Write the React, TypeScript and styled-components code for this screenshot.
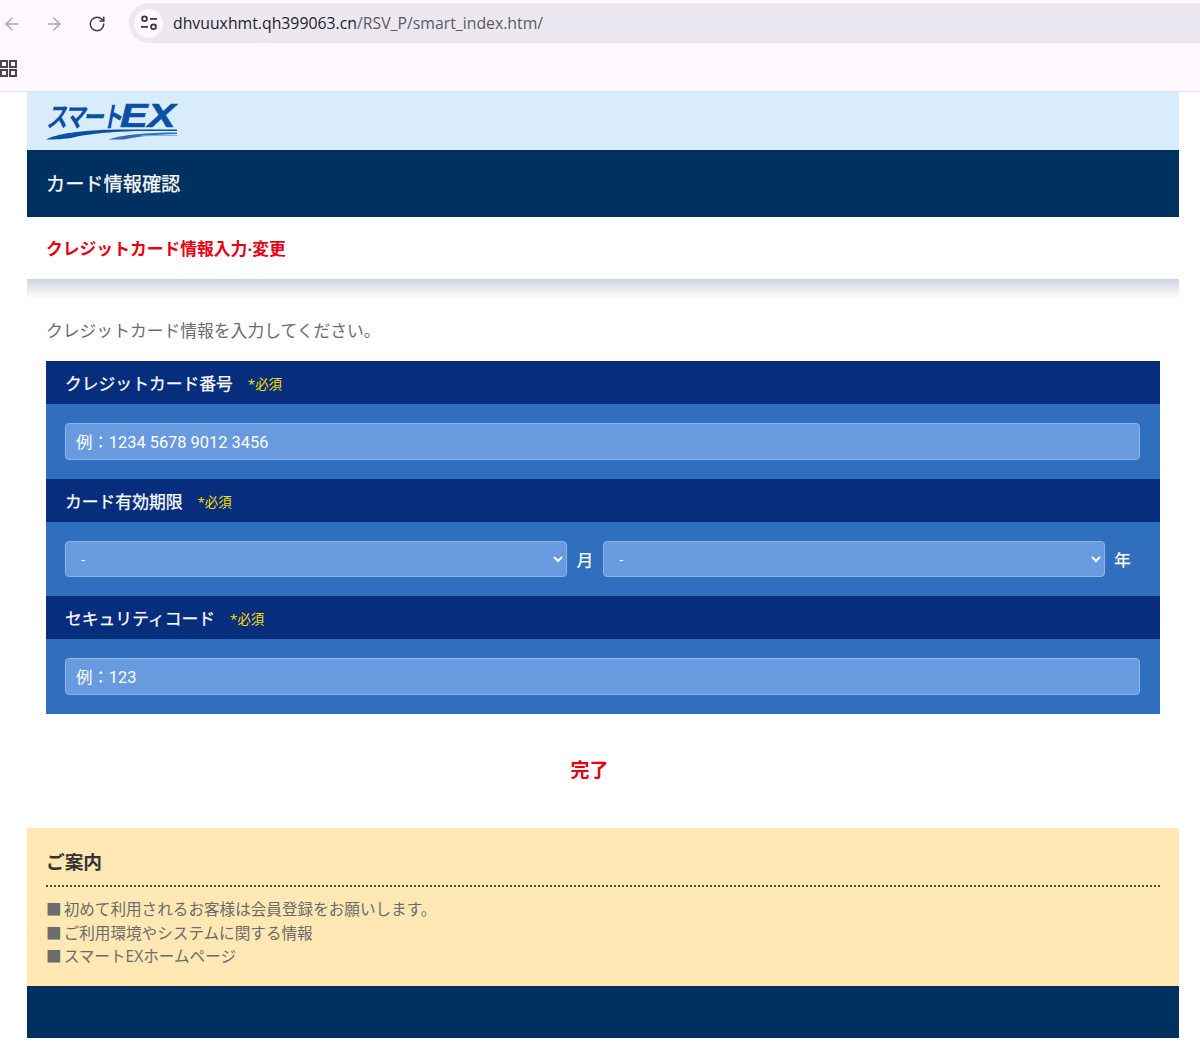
import React from 'react';
import styled, { createGlobalStyle } from 'styled-components';
import { ArrowLeft, ArrowRight, RotateCw } from 'lucide-react';

const GlobalStyle = createGlobalStyle`
  html, body {
    margin: 0;
    padding: 0;
    background: #ffffff;
    font-family: "Open Sans", "Noto Sans CJK JP", sans-serif;
  }
  * {
    box-sizing: border-box;
  }
`;

const BrowserBar = styled.div`
  height: 92px;
  background: #fdf7ff;
  border-bottom: 1px solid #e6e2e8;
`;

const Toolbar = styled.div`
  height: 46px;
  display: flex;
  align-items: center;
  padding-top: 1px;
`;

const NavButton = styled.div<{ $width: number; $color: string }>`
  width: ${(p) => p.$width}px;
  display: flex;
  justify-content: center;
  color: ${(p) => p.$color};
`;

const UrlPill = styled.div`
  flex: 1;
  height: 40px;
  margin-left: 19px;
  margin-top: -1px;
  padding-left: 5px;
  display: flex;
  align-items: center;
  gap: 10px;
  background: #ece8f1;
  border-radius: 20px 0 0 20px;
  font-family: "Open Sans", sans-serif;
  font-size: 15.8px;
  color: #5c5a63;
`;

const SiteBadge = styled.div`
  width: 29px;
  height: 29px;
  border-radius: 50%;
  background: #fdf7ff;
  display: flex;
  align-items: center;
  justify-content: center;
`;

const Host = styled.span`
  color: #1f1d26;
`;

const BookmarkRow = styled.div`
  height: 45px;
  display: flex;
  align-items: center;
`;

const Page = styled.div`
  width: 1152px;
  margin-left: 27px;
`;

const LogoBar = styled.div`
  height: 58px;
  background: #d9ecfb;
  padding: 8px 0 0 19px;
`;

const LogoWrap = styled.div`
  position: relative;
  width: 134px;
  height: 42px;
`;

const LogoText = styled.div`
  display: flex;
  align-items: center;
  height: 30px;
  font-family: "Liberation Sans", "Noto Sans CJK JP", sans-serif;
  font-weight: 700;
  font-style: italic;
  color: #0a50a5;
  white-space: nowrap;
`;

const LogoKana = styled.span`
  display: inline-block;
  width: 74px;
  font-size: 28px;
  letter-spacing: -3.5px;
  transform: scaleX(0.76);
  transform-origin: left center;
`;

const LogoLatin = styled.span`
  display: inline-block;
  font-size: 34px;
  -webkit-text-stroke: 0.7px #0a50a5;
  transform: scaleX(1.22);
  transform-origin: left center;
`;

const LogoSwoosh = styled.svg`
  position: absolute;
  left: 0;
  top: 29px;
`;

const TitleBar = styled.div`
  height: 67px;
  padding: 0 0 2px 19px;
  background: #003060;
  color: #ffffff;
  font-size: 19.2px;
  font-weight: 400;
  -webkit-text-stroke: 0.25px #ffffff;
  display: flex;
  align-items: center;
`;

const SubTitle = styled.div`
  height: 62px;
  display: flex;
  align-items: center;
  padding-left: 19px;
  color: #e60012;
  font-size: 16.8px;
  font-weight: 700;
`;

const Shade = styled.div`
  height: 20px;
  background: linear-gradient(#d0d4e2, #ffffff);
`;

const Lead = styled.p`
  margin: 0;
  height: 62px;
  padding: 20px 0 0 19px;
  font-size: 16.8px;
  line-height: 24px;
  color: #6b6b6b;
`;

const Form = styled.form`
  margin: 0 19px;
`;

const FieldHead = styled.div`
  height: 43px;
  background: #062e7c;
  color: #ffffff;
  font-size: 16.8px;
  font-weight: 400;
  -webkit-text-stroke: 0.25px #ffffff;
  display: flex;
  align-items: center;
  padding-left: 19px;
  gap: 15px;
`;

const Required = styled.span`
  color: #ffdf00;
  font-size: 13.4px;
  font-weight: 400;
  -webkit-text-stroke: 0;
`;

const FieldBody = styled.div<{ $height: number }>`
  height: ${(p) => p.$height}px;
  background: #306fbe;
  display: flex;
  align-items: center;
  padding: 0 20px 0 19px;
`;

const TextInput = styled.input`
  width: 100%;
  height: 37px;
  padding: 2px 10px 0;
  background: #689ae0;
  border: 1px solid #8eb4ea;
  border-radius: 4px;
  color: #ffffff;
  font-family: Roboto, "Noto Sans CJK JP", sans-serif;
  font-size: 16.4px;
  outline: none;
  &::placeholder {
    color: #ffffff;
    opacity: 1;
  }
`;

const SelectInput = styled.select`
  flex: 1;
  min-width: 0;
  height: 36px;
  padding: 0 11px;
  background-color: #689ae0;
  border: 1px solid #8eb4ea;
  border-radius: 4px;
  color: #ffffff;
  font-family: inherit;
  font-size: 14px;
  outline: none;
`;

const Unit = styled.span`
  width: 36px;
  text-align: center;
  color: #ffffff;
  font-size: 16.4px;
  font-weight: 400;
  -webkit-text-stroke: 0.25px #ffffff;
`;

const LastUnit = styled(Unit)`
  width: 35px;
`;

const Done = styled.div`
  height: 114px;
  display: flex;
  align-items: center;
  justify-content: center;
  padding: 0 27px 4px 0;
  color: #e60012;
  font-size: 19px;
  font-weight: 700;
`;

const Notice = styled.section`
  height: 158px;
  background: #ffe8b3;
  padding: 0 19px;
`;

const NoticeTitle = styled.h2`
  margin: 0;
  height: 59px;
  padding: 7px 0 0;
  display: flex;
  align-items: center;
  border-bottom: 2px dotted #4a4a3f;
  color: #333333;
  font-size: 18.7px;
  font-weight: 700;
`;

const NoticeList = styled.ul`
  margin: 0;
  padding: 11px 0 0;
  list-style: none;
`;

const NoticeItem = styled.li`
  font-size: 15.6px;
  line-height: 23.5px;
  word-spacing: -2px;
  color: #6b6b6b;
`;

const Footer = styled.footer`
  height: 52px;
  background: #003060;
`;

export default function App() {
  return (
    <>
      <GlobalStyle />
      <BrowserBar>
        <Toolbar>
          <NavButton $width={24} $color="#a9a6ad">
            <ArrowLeft size={20} strokeWidth={1.8} />
          </NavButton>
          <NavButton $width={60} $color="#a9a6ad">
            <ArrowRight size={20} strokeWidth={1.8} />
          </NavButton>
          <NavButton $width={26} $color="#3f3d45">
            <RotateCw size={18} strokeWidth={2} />
          </NavButton>
          <UrlPill>
            <SiteBadge>
              <svg width="18" height="16" viewBox="0 0 18 16" fill="none" stroke="#37353d" strokeWidth="1.8">
                <circle cx="4.5" cy="3.8" r="2.4" />
                <path d="M10 3.8h7M1 11.8h7" />
                <circle cx="13.5" cy="11.8" r="2.4" />
              </svg>
            </SiteBadge>
            <span>
              <Host>dhvuuxhmt.qh399063.cn</Host>/RSV_P/smart_index.htm/
            </span>
          </UrlPill>
        </Toolbar>
        <BookmarkRow>
          <svg width="18" height="18" viewBox="0 0 18 18" fill="none" stroke="#4a484f" strokeWidth="2">
            <rect x="1" y="1" width="6" height="6" />
            <rect x="10" y="1" width="6" height="6" />
            <rect x="1" y="10" width="6" height="6" />
            <rect x="10" y="10" width="6" height="6" />
          </svg>
        </BookmarkRow>
      </BrowserBar>
      <Page>
        <LogoBar>
          <LogoWrap>
            <LogoText>
              <LogoKana>スマート</LogoKana>
              <LogoLatin>EX</LogoLatin>
            </LogoText>
            <LogoSwoosh width="131" height="11" viewBox="0 0 131 11">
              <path d="M0 10.500C10 5 35 1 70 .5L131 .5V2H90C60 3 35 6 25 9C15 10.500 5 10.500 0 10.500z" fill="#0a50a5" />
              <path d="M62 10.500C75 6 100 3.500 131 3.500V5C105 5.500 90 8 78 10.500z" fill="#2f6db8" />
              <path d="M95 6.500C105 6 118 6 131 6V7C118 7 105 7 95 7.500z" fill="#8ab0dc" />
            </LogoSwoosh>
          </LogoWrap>
        </LogoBar>
        <TitleBar>カード情報確認</TitleBar>
        <SubTitle>クレジットカード情報入力·変更</SubTitle>
        <Shade />
        <Lead>クレジットカード情報を入力してください。</Lead>
        <Form>
          <FieldHead>
            クレジットカード番号<Required>*必須</Required>
          </FieldHead>
          <FieldBody $height={75}>
            <TextInput placeholder="例：1234 5678 9012 3456" />
          </FieldBody>
          <FieldHead>
            カード有効期限<Required>*必須</Required>
          </FieldHead>
          <FieldBody $height={74}>
            <SelectInput defaultValue="-">
              <option>-</option>
            </SelectInput>
            <Unit>月</Unit>
            <SelectInput defaultValue="-">
              <option>-</option>
            </SelectInput>
            <LastUnit>年</LastUnit>
          </FieldBody>
          <FieldHead>
            セキュリティコード<Required>*必須</Required>
          </FieldHead>
          <FieldBody $height={75}>
            <TextInput placeholder="例：123" />
          </FieldBody>
        </Form>
        <Done>完了</Done>
        <Notice>
          <NoticeTitle>ご案内</NoticeTitle>
          <NoticeList>
            <NoticeItem>■ 初めて利用されるお客様は会員登録をお願いします。</NoticeItem>
            <NoticeItem>■ ご利用環境やシステムに関する情報</NoticeItem>
            <NoticeItem>■ スマートEXホームページ</NoticeItem>
          </NoticeList>
        </Notice>
        <Footer />
      </Page>
    </>
  );
}
